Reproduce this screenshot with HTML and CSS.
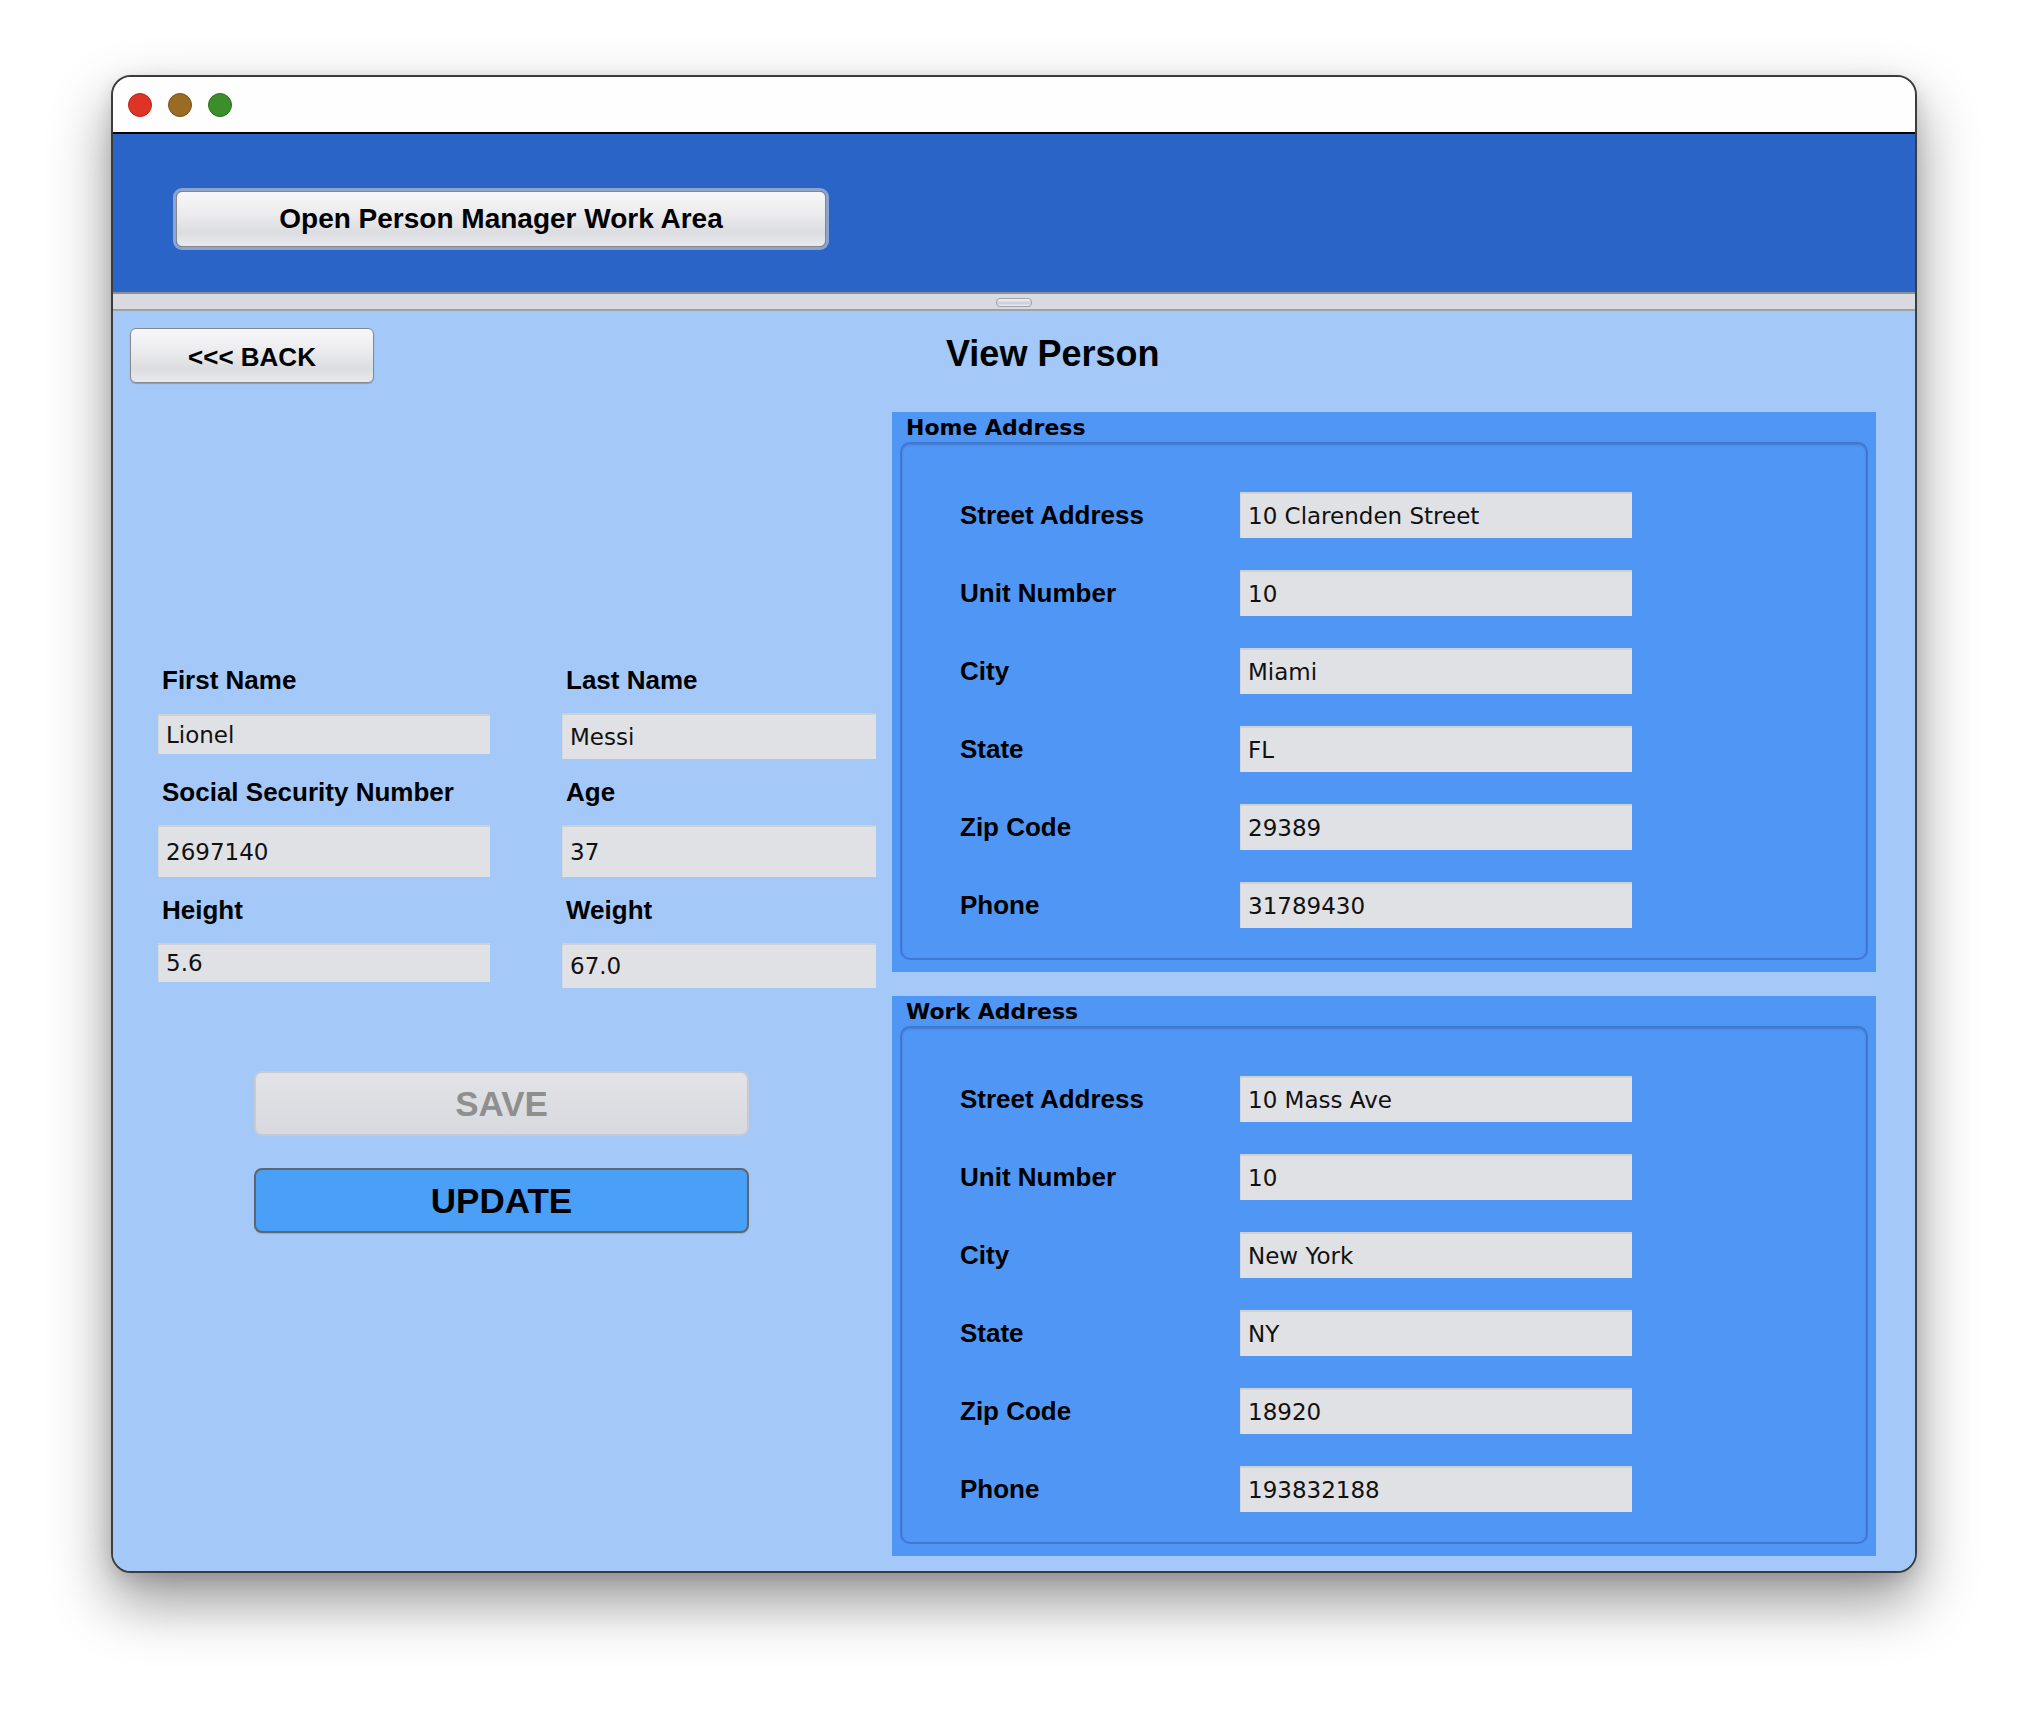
FILE: index.html
```html
<!DOCTYPE html>
<html lang="en">
<head>
<meta charset="utf-8">
<title>View Person</title>
<link rel="stylesheet" href="styles.css">
</head>
<body>
<div class="window">
  <div class="titlebar">
    <span class="light light-close"></span>
    <span class="light light-min"></span>
    <span class="light light-max"></span>
  </div>
  <div class="header">
    <button class="btn btn-aqua btn-open">Open Person Manager Work Area</button>
  </div>
  <div class="divider"><span class="divider-handle"></span></div>
  <div class="content">
    <div class="left-col">
      <button class="btn btn-aqua btn-back">&lt;&lt;&lt; BACK</button>
      <div class="person-form">
        <div class="form-label">First Name</div>
        <div class="form-label">Last Name</div>
        <div class="field field-first">Lionel</div>
        <div class="field field-last">Messi</div>
        <div class="form-label">Social Security Number</div>
        <div class="form-label">Age</div>
        <div class="field field-tall">2697140</div>
        <div class="field field-tall">37</div>
        <div class="form-label">Height</div>
        <div class="form-label">Weight</div>
        <div class="field field-height">5.6</div>
        <div class="field field-weight">67.0</div>
      </div>
      <div class="actions">
        <button class="btn btn-save">SAVE</button>
        <button class="btn btn-update">UPDATE</button>
      </div>
    </div>
    <div class="right-col">
      <h1 class="page-title">View Person</h1>
      <section class="address-panel">
        <div class="panel-legend">Home Address</div>
        <div class="panel-box">
          <div class="addr-row"><span class="addr-label">Street Address</span><div class="field addr-field">10 Clarenden Street</div></div>
          <div class="addr-row"><span class="addr-label">Unit Number</span><div class="field addr-field">10</div></div>
          <div class="addr-row"><span class="addr-label">City</span><div class="field addr-field">Miami</div></div>
          <div class="addr-row"><span class="addr-label">State</span><div class="field addr-field">FL</div></div>
          <div class="addr-row"><span class="addr-label">Zip Code</span><div class="field addr-field">29389</div></div>
          <div class="addr-row"><span class="addr-label">Phone</span><div class="field addr-field">31789430</div></div>
        </div>
      </section>
      <section class="address-panel address-panel-work">
        <div class="panel-legend">Work Address</div>
        <div class="panel-box">
          <div class="addr-row"><span class="addr-label">Street Address</span><div class="field addr-field">10 Mass Ave</div></div>
          <div class="addr-row"><span class="addr-label">Unit Number</span><div class="field addr-field">10</div></div>
          <div class="addr-row"><span class="addr-label">City</span><div class="field addr-field">New York</div></div>
          <div class="addr-row"><span class="addr-label">State</span><div class="field addr-field">NY</div></div>
          <div class="addr-row"><span class="addr-label">Zip Code</span><div class="field addr-field">18920</div></div>
          <div class="addr-row"><span class="addr-label">Phone</span><div class="field addr-field">193832188</div></div>
        </div>
      </section>
    </div>
  </div>
</div>
</body>
</html>
```

FILE: styles.css
```css
* { box-sizing: border-box; }

html, body {
  margin: 0;
  background: #ffffff;
}

body {
  min-height: 1720px;
  padding: 75px 0 0 111px;
  font-family: "Liberation Sans", Arial, sans-serif;
  color: #000;
}

.window {
  width: 1806px;
  height: 1498px;
  border: 2px solid #3c3c3c;
  border-radius: 20px;
  overflow: hidden;
  display: flex;
  flex-direction: column;
  box-shadow: 0 28px 60px rgba(0, 0, 0, 0.42), 0 6px 18px rgba(0, 0, 0, 0.12);
  background: #a4c9f8;
}

/* title bar */
.titlebar {
  height: 57px;
  flex: none;
  background: #fefefe;
  border-bottom: 2px solid #000;
  display: flex;
  align-items: center;
  gap: 16px;
  padding-left: 15px;
}

.light {
  width: 24px;
  height: 24px;
  border-radius: 50%;
  display: block;
}
.light-close { background: #de3325; border: 1px solid #b5261b; }
.light-min { background: #9a6b24; border: 1px solid #7a531a; }
.light-max { background: #3c8e2b; border: 1px solid #2d6f20; }

/* header */
.header {
  height: 158px;
  flex: none;
  background: #2a64c6;
  padding: 57px 0 0 63px;
}

.btn {
  display: flex;
  align-items: center;
  justify-content: center;
  font-family: "Liberation Sans", Arial, sans-serif;
  font-weight: bold;
  color: #000;
  padding: 0;
  margin: 0;
  cursor: default;
}

.btn-aqua {
  border: 1px solid #85878c;
  border-radius: 6px;
  background: linear-gradient(#f7f7f9 0%, #ececef 40%, #dcdde1 75%, #e9eaed 100%);
  box-shadow: 0 1px 1px rgba(0, 0, 0, 0.2);
}

.btn-open {
  width: 650px;
  height: 56px;
  font-size: 28px;
  box-shadow: 0 0 0 3px #8ba5cf;
}

/* split divider */
.divider {
  height: 19px;
  flex: none;
  background: #d9dadf;
  border-top: 2px solid #8b9099;
  border-bottom: 2px solid #9da1a9;
  display: flex;
  justify-content: center;
  padding-top: 4px;
}

.divider-handle {
  width: 36px;
  height: 9px;
  border-radius: 4px;
  border: 1px solid #9ea2aa;
  background: linear-gradient(#f4f4f6, #c9ccd2 60%, #eeeff2);
}

/* content */
.content {
  flex: 1;
  background: #a4c9f8;
  display: grid;
  grid-template-columns: 779px 984px;
  align-items: start;
}

.left-col {
  display: flex;
  flex-direction: column;
  align-items: flex-start;
}

.btn-back {
  margin: 17px 0 0 17px;
  width: 244px;
  height: 55px;
  font-size: 26px;
  padding-top: 3px;
}

.person-form {
  margin: 282px 0 0 45px;
  display: grid;
  grid-template-columns: 332px 314px;
  grid-template-rows: 30px 46px 30px 52px 30px 45px;
  column-gap: 72px;
  row-gap: 18px;
  align-items: start;
}

.form-label {
  font-size: 26px;
  font-weight: bold;
  line-height: 30px;
  padding-left: 4px;
  white-space: nowrap;
}

.field {
  background: #e0e1e5;
  box-shadow: inset 0 2px 0 #cdd0d5, inset 1px 0 0 #d6d8dc;
  font-family: "DejaVu Sans", "Liberation Sans", sans-serif;
  font-size: 23px;
  color: #111;
  display: flex;
  align-items: center;
  padding: 1px 0 0 8px;
  white-space: nowrap;
}

.field-first { height: 40px; margin-top: 1px; }
.field-last { height: 46px; }
.field-tall { height: 52px; }
.field-height { height: 39px; }
.field-weight { height: 45px; }

.actions {
  margin: 83px 0 0 141px;
  display: flex;
  flex-direction: column;
  gap: 32px;
}

.btn-save,
.btn-update {
  width: 495px;
  height: 65px;
  font-size: 35px;
  border-radius: 8px;
}

.btn-save {
  background: linear-gradient(#e2e3e7, #d8d9de);
  border: 2px solid #c6cad2;
  color: #8f8f8f;
}

.btn-update {
  background: #4a9ff7;
  border: 2px solid #5d6570;
  box-shadow: 0 1px 1px rgba(0, 0, 0, 0.15);
}

/* right column */
.right-col {
  display: flex;
  flex-direction: column;
}

.page-title {
  margin: 22px 0 0 54px;
  font-size: 36px;
  line-height: 41px;
  font-weight: bold;
}

.address-panel {
  margin-top: 38px;
  background: #5096f5;
  padding: 3px 8px 12px 8px;
}

.address-panel-work {
  margin-top: 24px;
}

.panel-legend {
  font-family: "DejaVu Sans", "Liberation Sans", sans-serif;
  font-weight: bold;
  font-size: 22px;
  line-height: 26px;
  padding-left: 6px;
}

.panel-box {
  margin-top: 1px;
  height: 518px;
  border: 2px solid #3f78d3;
  border-radius: 10px;
  box-shadow: inset 0 1px 2px rgba(0, 0, 0, 0.18);
  padding: 48px 0 0 58px;
  display: flex;
  flex-direction: column;
  gap: 32px;
}

.addr-row {
  display: flex;
  align-items: center;
}

.addr-label {
  width: 280px;
  font-size: 26px;
  font-weight: bold;
  white-space: nowrap;
}

.addr-field {
  width: 392px;
  height: 46px;
}
```
